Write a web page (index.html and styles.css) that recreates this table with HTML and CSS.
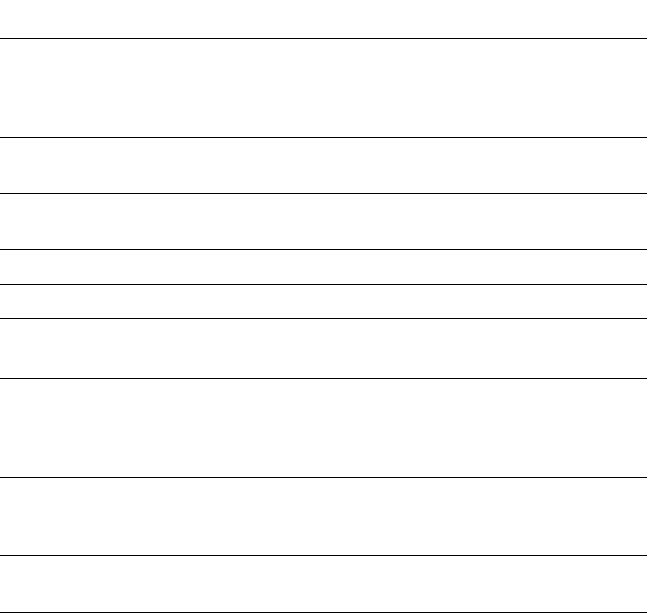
FILE: index.html
```html
<!DOCTYPE html>
<html>
<head>
<meta charset="utf-8">
<link rel="stylesheet" href="styles.css">
</head>
<body>
<div class="list">
  <div class="row h99"></div>
  <div class="row h56"></div>
  <div class="row h56"></div>
  <div class="row h35"></div>
  <div class="row h34"></div>
  <div class="row h60"></div>
  <div class="row h99"></div>
  <div class="row h78"></div>
  <div class="row h57 last"></div>
</div>
</body>
</html>
```
FILE: styles.css
```css
html, body {
  margin: 0;
  padding: 0;
  background: #fff;
  font-family: "Liberation Sans", Arial, sans-serif;
}
.list {
  padding-top: 38px;
  width: 647px;
  display: flex;
  flex-direction: column;
}
.row {
  box-sizing: border-box;
  border-top: 1px solid #000;
}
.row.last {
  border-bottom: 1px solid #000;
}
.h99 { height: 99px; }
.h56 { height: 56px; }
.h35 { height: 35px; }
.h34 { height: 34px; }
.h60 { height: 60px; }
.h78 { height: 78px; }
.h57 { height: 58px; }
```
